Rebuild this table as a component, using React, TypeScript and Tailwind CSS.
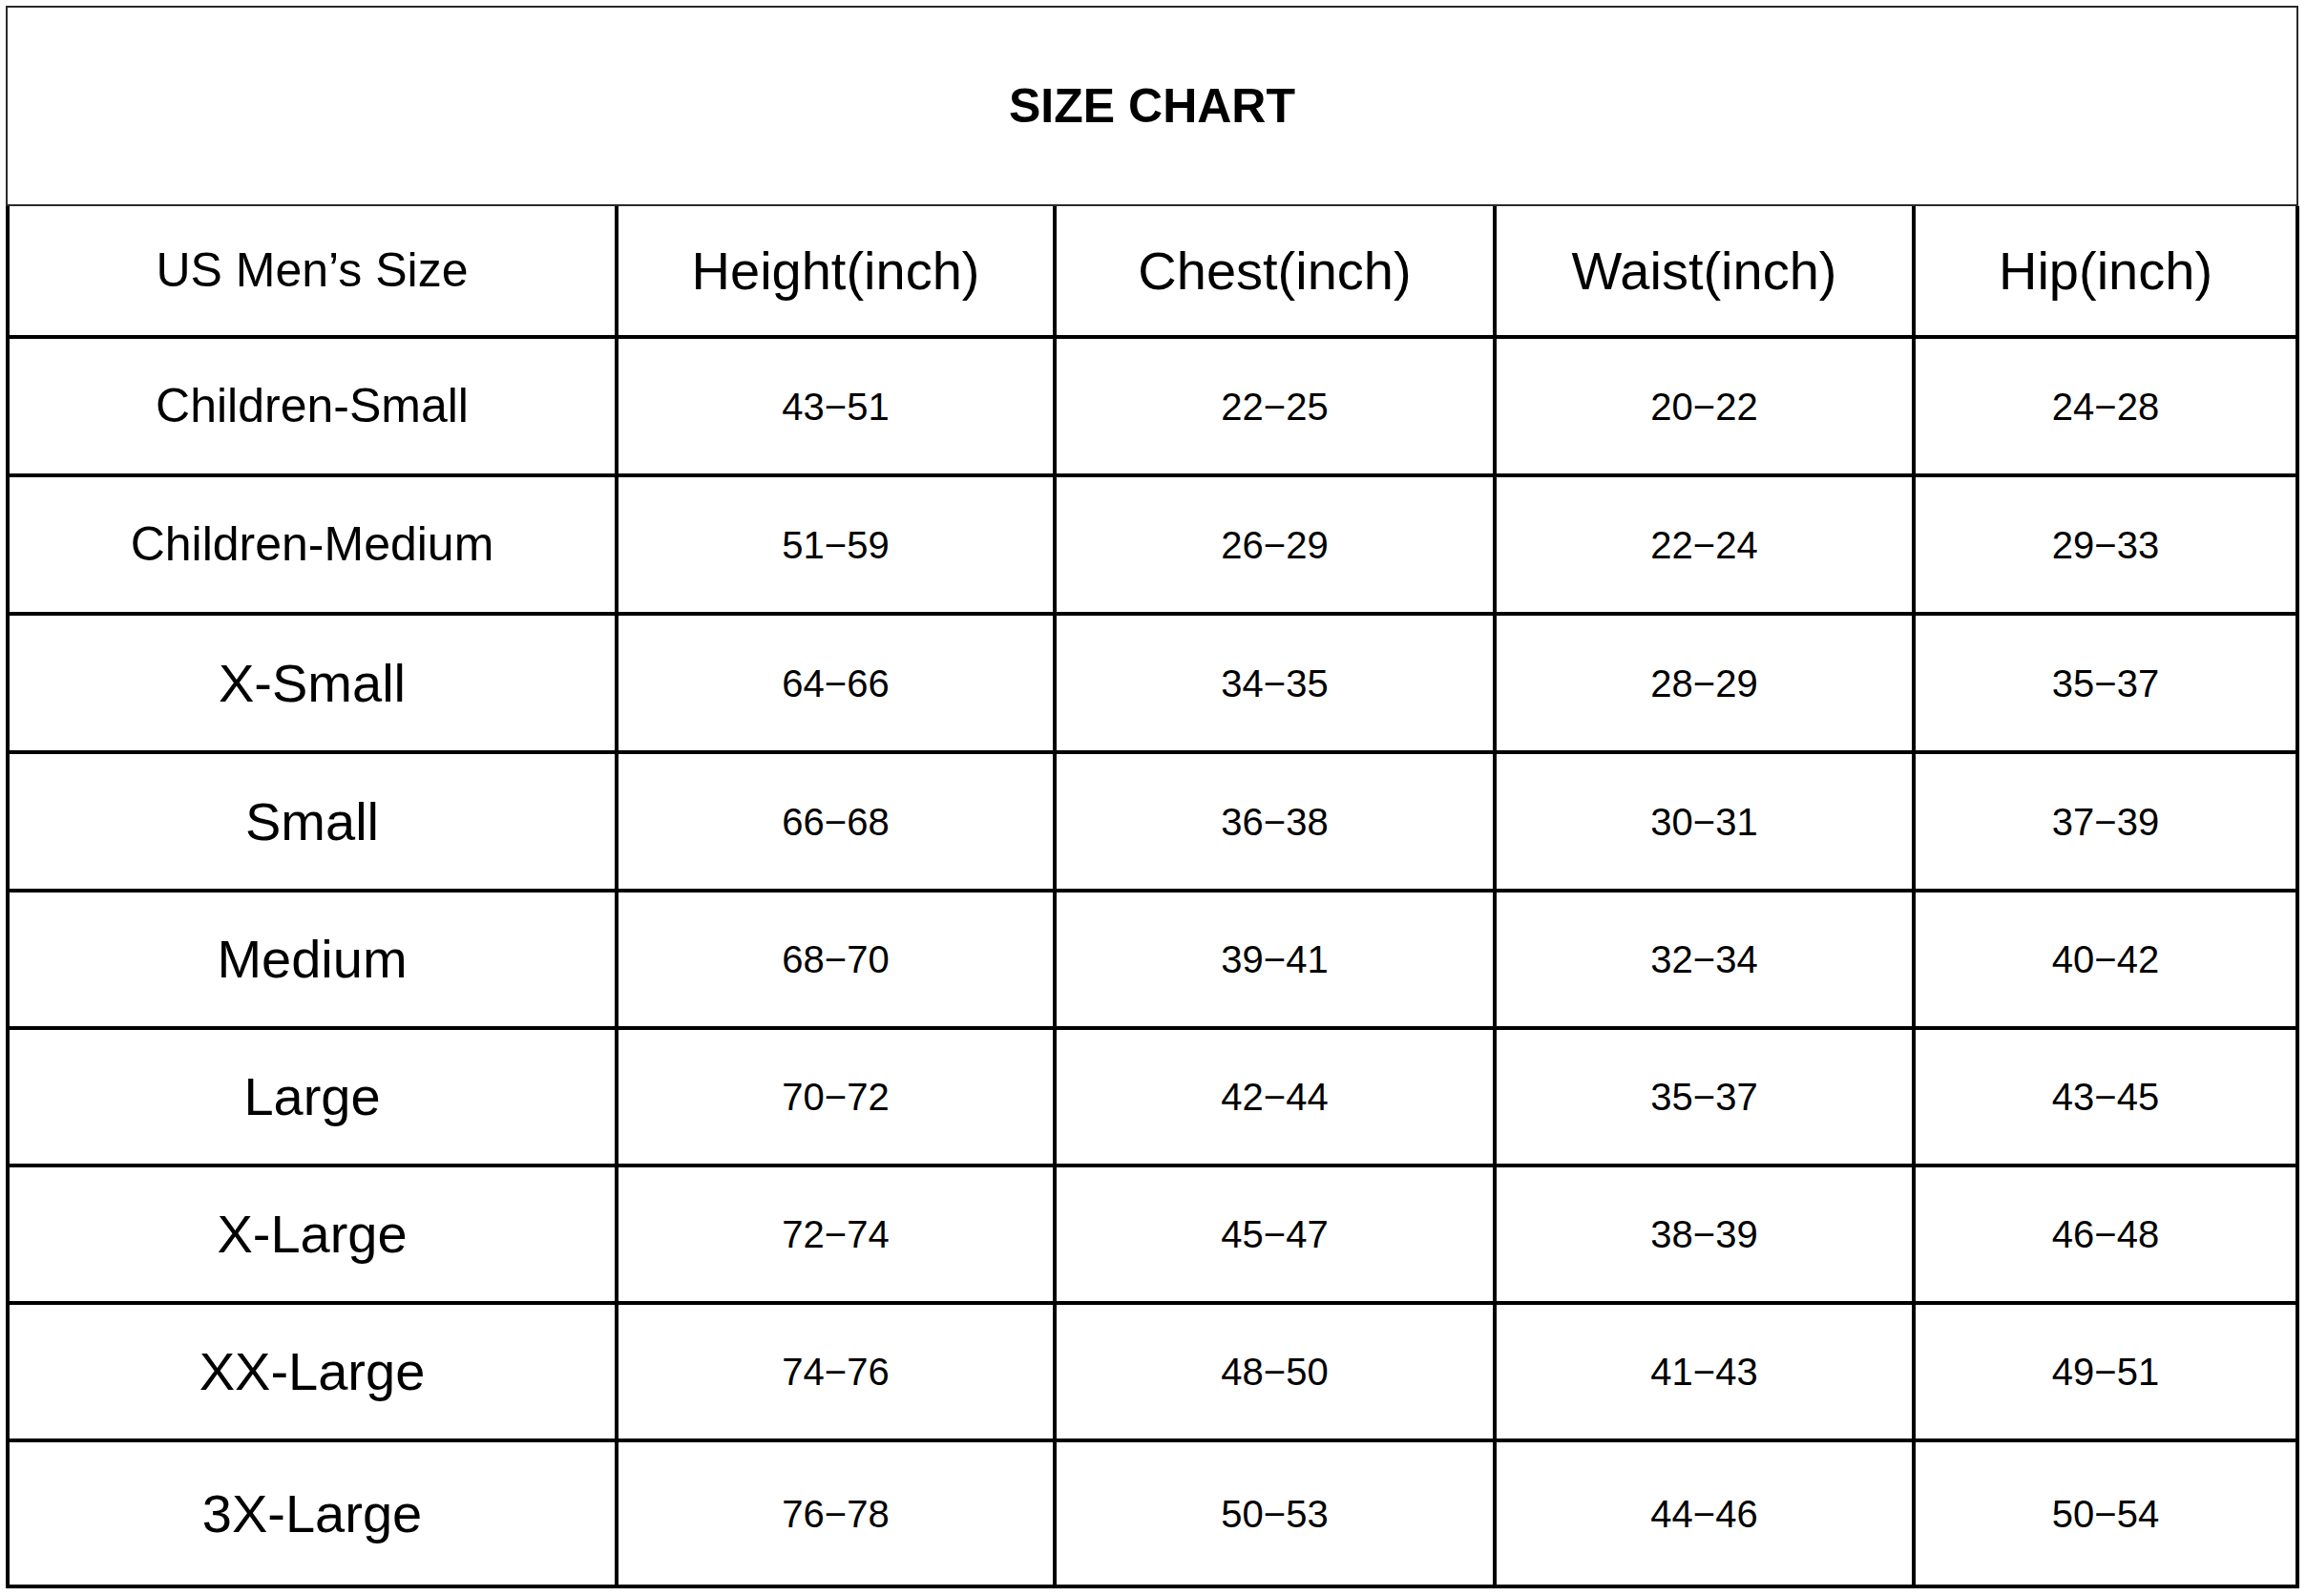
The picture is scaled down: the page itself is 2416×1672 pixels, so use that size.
import React from "react";

const rows: { label: string; big: boolean; vals: string[] }[] = [
  { label: "Children-Small", big: false, vals: ["43−51", "22−25", "20−22", "24−28"] },
  { label: "Children-Medium", big: false, vals: ["51−59", "26−29", "22−24", "29−33"] },
  { label: "X-Small", big: true, vals: ["64−66", "34−35", "28−29", "35−37"] },
  { label: "Small", big: true, vals: ["66−68", "36−38", "30−31", "37−39"] },
  { label: "Medium", big: true, vals: ["68−70", "39−41", "32−34", "40−42"] },
  { label: "Large", big: true, vals: ["70−72", "42−44", "35−37", "43−45"] },
  { label: "X-Large", big: true, vals: ["72−74", "45−47", "38−39", "46−48"] },
  { label: "XX-Large", big: true, vals: ["74−76", "48−50", "41−43", "49−51"] },
  { label: "3X-Large", big: true, vals: ["76−78", "50−53", "44−46", "50−54"] },
];

const heights = ["h-[145px]", "h-[145px]", "h-[145px]", "h-[145px]", "h-[144px]", "h-[144px]", "h-[144px]", "h-[144px]", "h-[153px]"];
const widths = ["w-[638px]", "w-[459px]", "w-[461px]", "w-[439px]", "w-[402px]"];

export default function App() {
  return (
    <div className="w-[2416px] h-[1672px] bg-white pt-[6px] pl-[6px] text-black" style={{ fontFamily: '"Liberation Sans", Arial, sans-serif' }}>
      <div className="w-[2402px]">
        <div className="h-[210px] border-2 border-[#2a2a2a] flex items-center justify-center">
          <span className="text-[50px] font-bold leading-none">SIZE CHART</span>
        </div>
        <div className="border-l-4 border-black w-[2403px]">
          <div className="flex h-[139px] border-b-4 border-black">
            <div className={`${widths[0]} border-r-4 border-black flex items-center justify-center text-[50px]`}>US Men’s Size</div>
            <div className={`${widths[1]} border-r-4 border-black flex items-center justify-center text-[56px]`}>Height(inch)</div>
            <div className={`${widths[2]} border-r-4 border-black flex items-center justify-center text-[56px]`}>Chest(inch)</div>
            <div className={`${widths[3]} border-r-4 border-black flex items-center justify-center text-[56px]`}>Waist(inch)</div>
            <div className={`${widths[4]} border-r-4 border-black flex items-center justify-center text-[56px]`}>Hip(inch)</div>
          </div>
          {rows.map((r, i) => (
            <div key={r.label} className={`flex ${heights[i]} border-b-4 border-black`}>
              <div className={`${widths[0]} border-r-4 border-black flex items-center justify-center ${r.big ? "text-[56px]" : "text-[50px]"}`}>
                {r.label}
              </div>
              <div className={`${widths[1]} border-r-4 border-black flex items-center justify-center text-[40px]`}>{r.vals[0]}</div>
              <div className={`${widths[2]} border-r-4 border-black flex items-center justify-center text-[40px]`}>{r.vals[1]}</div>
              <div className={`${widths[3]} border-r-4 border-black flex items-center justify-center text-[40px]`}>{r.vals[2]}</div>
              <div className={`${widths[4]} border-r-4 border-black flex items-center justify-center text-[40px]`}>{r.vals[3]}</div>
            </div>
          ))}
        </div>
      </div>
    </div>
  );
}
